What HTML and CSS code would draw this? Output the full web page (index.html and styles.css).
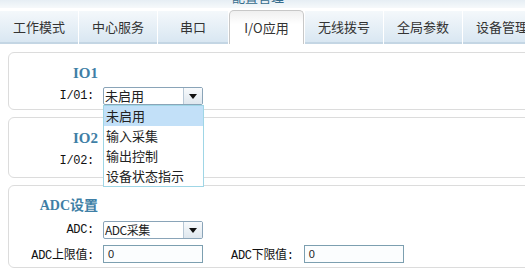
FILE: index.html
```html
<!DOCTYPE html>
<html>
<head>
<meta charset="utf-8">
<title>I/O应用</title>
<link rel="stylesheet" href="styles.css">
</head>
<body>
<div class="topbar"><span class="title">配置管理</span></div>
<ul class="tabs">
	<li>工作模式</li>
	<li>中心服务</li>
	<li class="narrow">串口</li>
	<li class="active">I/O应用</li>
	<li>无线拨号</li>
	<li>全局参数</li>
	<li>设备管理</li>
</ul>
<div class="panel p1">
	<h3>IO1</h3>
	<div class="row">
		<label>I/01:</label>
		<div class="sel">
			<span>未启用</span><i class="arrow"></i>
			<ul class="options">
				<li class="on">未启用</li>
				<li>输入采集</li>
				<li>输出控制</li>
				<li>设备状态指示</li>
			</ul>
		</div>
	</div>
</div>
<div class="panel p2">
	<h3>IO2</h3>
	<div class="row">
		<label>I/02:</label>
	</div>
</div>
<div class="panel p3">
	<h3>ADC设置</h3>
	<div class="row">
		<label>ADC:</label>
		<div class="sel"><span class="adc">ADC采集</span><i class="arrow"></i></div>
	</div>
	<div class="row">
		<label>ADC上限值:</label>
		<div class="txt">0</div>
		<label class="second">ADC下限值:</label>
		<div class="txt">0</div>
	</div>
</div>
</body>
</html>
```
FILE: styles.css
```css
body{
	margin:0;
	font-family:"Liberation Serif","Noto Sans CJK SC",serif;
	font-size:12px;
	color:#222;
	background:#fff;
	overflow:hidden;
}
.topbar{
	height:8px;
	background:linear-gradient(#e6eef4,#f6f9fb);
	overflow:hidden;
	position:relative;
}
.topbar .title{
	position:absolute;
	left:232px;
	top:-13px;
	font-size:13px;
	color:#356c8c;
	font-family:"Noto Sans CJK SC",sans-serif;
}
.tabs{
	list-style:none;
	margin:2px 0 0 0;
	padding:0;
	display:flex;
	height:34px;
	white-space:nowrap;
}
.tabs>li{
	width:78px;
	flex:none;
	margin-right:1px;
	height:31px;
	margin-top:1px;
	border-bottom:2px solid #c4d6e4;
	background:linear-gradient(#f4f8fb,#d9e7f2);
	text-align:center;
	line-height:31px;
	font-family:"Noto Sans CJK SC",sans-serif;
	font-size:13px;
	color:#333;
}
.tabs>li.narrow{
	width:70px;
}
.tabs>li.active{
	width:73px;
	margin-top:0;
	height:33px;
	border:1px solid #c8c8c8;
	border-bottom:none;
	border-radius:5px 5px 0 0;
	background:linear-gradient(#f0f0f0,#fff 40%);
	line-height:33px;
	margin-right:1px;
}
.panel{
	margin:8px -12px 0 8px;
	border:1px solid #dcdcdc;
	border-radius:6px;
	position:relative;
}
.panel.p1{
	height:56px;
	z-index:2;
}
.panel.p2{
	margin-top:7px;
	height:59px;
}
.panel.p3{
	margin-top:7px;
	height:81px;
}
.panel h3{
	width:89px;
	margin:12px 0 6px 0;
	text-align:right;
	font-size:15px;
	line-height:16px;
	color:#3f7fa6;
	font-weight:bold;
}
.p3 h3{
	margin-top:12px;
	margin-bottom:7px;
	font-size:14px;
}
.row{
	display:flex;
	align-items:center;
	height:18px;
	margin-bottom:6px;
}
.row>label{
	width:85px;
	text-align:right;
	margin-right:9px;
	font-family:"Liberation Mono","Noto Sans CJK SC",monospace;
	font-size:12px;
	color:#111;
	letter-spacing:-0.3px;
}
.row>label.second{
	width:auto;
	margin-left:28px;
	margin-right:10px;
}
.sel{
	position:relative;
	width:98px;
	height:16px;
	border:1px solid #8aa4b8;
	border-radius:2px;
	display:flex;
	align-items:center;
	font-family:"Noto Sans CJK SC",sans-serif;
	font-size:13px;
	background:#fff;
}
.sel>span{
	flex:1;
	padding-left:1px;
	line-height:16px;
}
.sel>span.adc{
	font-size:12px;
	letter-spacing:-0.5px;
}
.sel .arrow{
	width:18px;
	height:16px;
	border-left:1px solid #b8c8d6;
	background:linear-gradient(#f8fafc,#dfe7ee);
	position:relative;
}
.sel .arrow:after{
	content:"";
	position:absolute;
	left:5px;
	top:6px;
	border-left:4px solid transparent;
	border-right:4px solid transparent;
	border-top:5px solid #111;
}
.options{
	list-style:none;
	margin:0;
	padding:0;
	position:absolute;
	left:-1px;
	top:17px;
	width:99px;
	border:1px solid #9fd6e6;
	background:#fff;
}
.options>li{
	height:20px;
	line-height:20px;
	padding-left:2px;
	font-size:13px;
}
.options>li.on{
	background:#c2e0f8;
}
.txt{
	width:94px;
	height:16px;
	border:1px solid #7c9fb0;
	padding-left:4px;
	line-height:16px;
	background:#fbfdfe;
	font-family:"Liberation Sans",sans-serif;
	font-size:11px;
}
```
